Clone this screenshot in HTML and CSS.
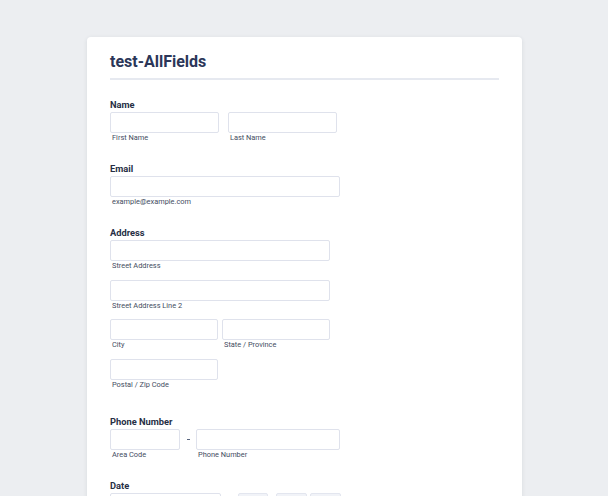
FILE: index.html
```html
<!DOCTYPE html>
<html lang="en">
<head>
<meta charset="utf-8">
<title>test-AllFields</title>
<link rel="stylesheet" href="styles.css">
</head>
<body>
<main class="card">
  <header class="form-header">
    <h1 class="form-title">test-AllFields</h1>
  </header>

  <section class="field">
    <div class="label">Name</div>
    <div class="row gap-name">
      <div class="sub">
        <div class="input w109"></div>
        <div class="sublabel">First Name</div>
      </div>
      <div class="sub">
        <div class="input w109"></div>
        <div class="sublabel">Last Name</div>
      </div>
    </div>
  </section>

  <section class="field">
    <div class="label">Email</div>
    <div class="sub">
      <div class="input w230"></div>
      <div class="sublabel">example@example.com</div>
    </div>
  </section>

  <section class="field field-address">
    <div class="label">Address</div>
    <div class="sub addr-line">
      <div class="input w220"></div>
      <div class="sublabel">Street Address</div>
    </div>
    <div class="sub addr-line">
      <div class="input w220"></div>
      <div class="sublabel">Street Address Line 2</div>
    </div>
    <div class="row gap-city addr-line">
      <div class="sub">
        <div class="input w108"></div>
        <div class="sublabel">City</div>
      </div>
      <div class="sub">
        <div class="input w108"></div>
        <div class="sublabel">State / Province</div>
      </div>
    </div>
    <div class="sub">
      <div class="input w108"></div>
      <div class="sublabel">Postal / Zip Code</div>
    </div>
  </section>

  <section class="field">
    <div class="label">Phone Number</div>
    <div class="row">
      <div class="sub">
        <div class="input w70"></div>
        <div class="sublabel">Area Code</div>
      </div>
      <div class="dash"><span class="dash-mark"></span></div>
      <div class="sub">
        <div class="input w144"></div>
        <div class="sublabel">Phone Number</div>
      </div>
    </div>
  </section>

  <section class="field">
    <div class="label">Date</div>
    <div class="row">
      <div class="input w111"></div>
      <div class="time-group">
        <div class="input time w30"></div>
        <div class="input time w31 ml8"></div>
        <div class="input time w31 ml3"></div>
      </div>
    </div>
  </section>
</main>
</body>
</html>
```

FILE: styles.css
```css
* { box-sizing: border-box; }

html, body {
  margin: 0;
  padding: 0;
  background: #eceef1;
  font-family: Roboto, "Noto Sans", "DejaVu Sans", sans-serif;
  color: #2c3345;
  overflow: hidden;
}

body {
  height: 496px;
}

.card {
  margin: 37px 0 0 87px;
  width: 435px;
  min-height: 600px;
  background: #ffffff;
  border-radius: 4px;
  padding: 0 23px;
  box-shadow: 0 1px 4px rgba(40, 50, 70, 0.10);
}

.form-header {
  padding-top: 14px;
  padding-bottom: 5px;
  border-bottom: 2px solid #e6e9f0;
  margin-bottom: 18.3px;
}

.form-title {
  margin: 0;
  font-size: 16px;
  line-height: 22px;
  font-weight: 700;
  color: #2b3658;
}

.field {
  margin-bottom: 18.5px;
}

.field-address {
  margin-bottom: 24.5px;
}

.label {
  height: 14px;
  font-size: 9.3px;
  line-height: 14px;
  font-weight: 700;
  color: #262f45;
}

.row {
  display: flex;
  align-items: flex-start;
}

.gap-name { gap: 9px; }
.gap-city { gap: 4px; }

.sub {
  display: flex;
  flex-direction: column;
}

.addr-line {
  margin-bottom: 8px;
}

.input {
  height: 21px;
  border: 1px solid #dfe2ec;
  border-radius: 2px;
  background: #ffffff;
}

.sublabel {
  height: 10.5px;
  font-size: 7.4px;
  line-height: 10.5px;
  padding-left: 2px;
  color: #434c61;
}

.w30 { width: 30px; }
.w31 { width: 31px; }
.w70 { width: 70px; }
.w108 { width: 108px; }
.w109 { width: 109px; }
.w111 { width: 111px; }
.w144 { width: 144px; }
.w220 { width: 220px; }
.w230 { width: 230px; }

.dash {
  width: 16px;
  height: 21px;
  display: flex;
  align-items: center;
  justify-content: center;
}

.dash-mark {
  display: block;
  width: 3px;
  height: 1px;
  background: #57647e;
  margin-left: 1px;
}

.time-group {
  display: flex;
  margin-left: 17px;
}

.input.time {
  background: #f1f3f8;
  border-color: #e3e6ef;
}

.ml8 { margin-left: 8px; }
.ml3 { margin-left: 3px; }
```
